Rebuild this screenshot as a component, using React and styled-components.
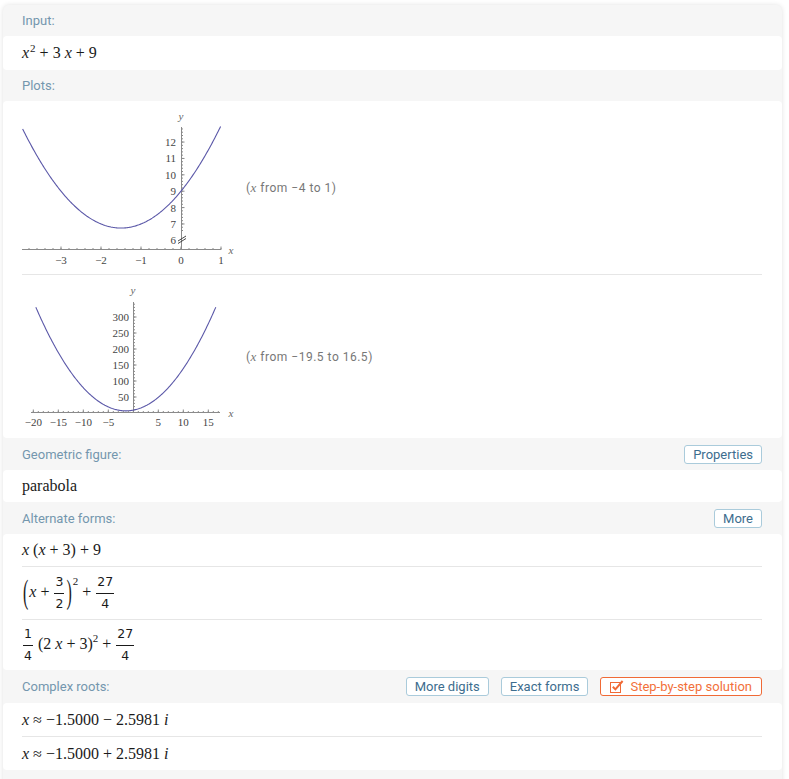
import React from "react";
import styled, { createGlobalStyle } from "styled-components";

const GlobalStyle = createGlobalStyle`
  * { box-sizing: border-box; }
  body {
    margin: 0;
    background: #fff;
    font-family: Roboto, "Liberation Sans", sans-serif;
  }
`;

const Card = styled.div`
  margin: 5px 0 0 3px;
  width: 779px;
  background: #f6f6f6;
  border-radius: 6px 6px 0 0;
  box-shadow: 0 0 5px rgba(0, 0, 0, 0.12);
  padding-bottom: 20px;
`;

const PodHeader = styled.div`
  height: ${(p) => p.$h || 32}px;
  display: flex;
  align-items: center;
  justify-content: space-between;
  padding: 0 20px 0 19px;
  font-size: 13px;
  color: #7497ae;
`;

const PodBody = styled.div`
  background: #fff;
  border-radius: 4px;
  padding: 0 20px 0 19px;
`;

const Row = styled.div`
  display: flex;
  align-items: center;
  height: ${(p) => p.$h}px;
  border-top: ${(p) => (p.$sep ? "1px solid #e6e6e6" : "none")};
  font-family: "Liberation Serif", serif;
  font-size: 16px;
  color: #1a1a1a;
`;

const Math = styled.span`
  white-space: nowrap;
  line-height: 1;
`;

const I = styled.i`
  font-style: italic;
`;

const Sup = styled.sup`
  font-size: 11px;
  position: relative;
  top: ${(p) => p.$top || 0}px;
  margin-left: ${(p) => p.$ml || 0}px;
  vertical-align: super;
  line-height: 0;
`;

const FracBox = styled.span`
  display: inline-flex;
  flex-direction: column;
  align-items: center;
  vertical-align: middle;
  font-family: "DejaVu Sans", sans-serif;
  font-size: 12.5px;
  line-height: 1;
  margin: 0 1px;
`;

const Num = styled.span`
  padding: 0 1px 4px;
  border-bottom: 1px solid #1a1a1a;
  align-self: stretch;
  text-align: center;
`;

const Den = styled.span`
  padding-top: 4px;
`;

const BigParen = styled.span`
  display: inline-block;
  transform: scale(1, 2.1);
  margin: 0 1px;
`;

const Frac = ({ n, d }) => (
  <FracBox>
    <Num>{n}</Num>
    <Den>{d}</Den>
  </FracBox>
);

const Caption = styled.span`
  margin-left: 9px;
  font-family: Roboto, sans-serif;
  font-size: 12px;
  letter-spacing: 0.5px;
  color: #777;
  i {
    font-family: "Liberation Serif", serif;
    font-size: 13px;
  }
`;

const PlotSvg = styled.svg`
  display: block;
  flex: none;
  overflow: visible;
`;

const Buttons = styled.div`
  display: flex;
  gap: 12px;
`;

const Btn = styled.button`
  height: 19px;
  display: inline-flex;
  align-items: center;
  gap: 6px;
  border: 1px solid ${(p) => (p.$orange ? "#f06a36" : "#aacbdb")};
  border-radius: 3px;
  background: #fff;
  color: ${(p) => (p.$orange ? "#f2703a" : "#3d6d8e")};
  font-family: Roboto, sans-serif;
  font-size: 13px;
  padding: 0 ${(p) => (p.$orange ? 9 : 8)}px;
`;

const range = (a, b, s) => {
  const r = [];
  for (let v = a; v <= b + 1e-9; v += s) r.push(+v.toFixed(4));
  return r;
};

const plots = [
  {
    h: 165,
    top: 105,
    mx: (u) => 181 + 40 * u,
    my: (v) => 191.2 - 16.38 * (v - 9),
    u0: -3.96,
    u1: 0.99,
    ax: 249.5,
    ay: 181.5,
    xa: [22, 221],
    ya: [127, 249.5],
    xMinor: range(-3.8, 1, 0.2),
    xMajor: [-3, -2, -1, 0, 1],
    yMinor: range(6.6, 12.8, 0.2),
    yMajor: [7, 8, 9, 10, 11, 12],
    xLabels: [[-3, "−3"], [-2, "−2"], [-1, "−1"], [0, "0"], [1, "1"]],
    yLabels: [12, 11, 10, 9, 8, 7, 6],
    labelY: 260,
    labelX: 176,
    yName: [181, 116],
    xName: [231, 250],
    brk: true,
    caption: ["−4", "1"],
  },
  {
    h: 155,
    top: 279,
    mx: (u) => 133.3 + 5 * u,
    my: (v) => 413 - 0.32 * v,
    u0: -19.5,
    u1: 16.5,
    ax: 412.5,
    ay: 133.5,
    xa: [31, 220],
    ya: [302, 412.5],
    xMinor: range(-20, 17, 1),
    xMajor: [-20, -15, -10, -5, 5, 10, 15],
    yMinor: range(10, 340, 10),
    yMajor: [50, 100, 150, 200, 250, 300],
    xLabels: [[-20, "−20"], [-15, "−15"], [-10, "−10"], [-5, "−5"], [5, "5"], [10, "10"], [15, "15"]],
    yLabels: [300, 250, 200, 150, 100, 50],
    labelY: 422,
    labelX: 129,
    yName: [133, 290],
    xName: [231, 413],
    brk: false,
    caption: ["−19.5", "16.5"],
  },
];

const f = (u) => u * u + 3 * u + 9;

function Plot({ c }) {
  const pts = [];
  for (let i = 0; i <= 240; i++) {
    const u = c.u0 + ((c.u1 - c.u0) * i) / 240;
    pts.push(`${c.mx(u).toFixed(2)},${c.my(f(u)).toFixed(2)}`);
  }
  return (
    <PlotSvg width={215} height={c.h} viewBox={`22 ${c.top} 215 ${c.h}`}>
      <g stroke="#8a8a8a" strokeWidth="1" fill="none">
        <line x1={c.xa[0]} x2={c.xa[1]} y1={c.ax} y2={c.ax} />
        <line x1={c.ay} x2={c.ay} y1={c.ya[0]} y2={c.ya[1]} />
        {c.xMinor.map((u) => (
          <line key={"xm" + u} x1={c.mx(u)} x2={c.mx(u)} y1={c.ax} y2={c.ax - 1.5} />
        ))}
        {c.xMajor.map((u) => (
          <line key={"xM" + u} x1={c.mx(u)} x2={c.mx(u)} y1={c.ax} y2={c.ax - 3} />
        ))}
        {c.yMinor.map((v) => (
          <line key={"ym" + v} x1={c.ay} x2={c.ay + 1.5} y1={c.my(v)} y2={c.my(v)} />
        ))}
        {c.yMajor.map((v) => (
          <line key={"yM" + v} x1={c.ay} x2={c.ay + 3} y1={c.my(v)} y2={c.my(v)} />
        ))}
      </g>
      {c.brk && (
        <g stroke="#333" strokeWidth="0.9">
          <line x1="178" y1="241" x2="186" y2="236" />
          <line x1="178" y1="243.5" x2="186" y2="238.5" />
        </g>
      )}
      <polyline points={pts.join(" ")} fill="none" stroke="#5b58a8" strokeWidth="1.1" />
      <g fontFamily="'Liberation Serif', serif" fontSize="11" fill="#444">
        {c.xLabels.map(([u, t]) => (
          <text key={"xl" + u} x={c.mx(u)} y={c.labelY} textAnchor="middle" dominantBaseline="central">
            {t}
          </text>
        ))}
        {c.yLabels.map((v) => (
          <text key={"yl" + v} x={c.labelX} y={c.my(v)} textAnchor="end" dominantBaseline="central">
            {v}
          </text>
        ))}
        <text x={c.yName[0]} y={c.yName[1]} textAnchor="middle" dominantBaseline="central" fontStyle="italic" fill="#666">
          y
        </text>
        <text x={c.xName[0]} y={c.xName[1]} textAnchor="middle" dominantBaseline="central" fontStyle="italic" fill="#666">
          x
        </text>
      </g>
    </PlotSvg>
  );
}

const StepIcon = () => (
  <svg width="14" height="13" viewBox="0 0 14 13">
    <rect x="0.5" y="2.5" width="10" height="10" fill="none" stroke="#f06a36" />
    <path d="M2.8 6.8 L5.4 9.4 L12.6 1" fill="none" stroke="#f06a36" strokeWidth="2" />
  </svg>
);

const App = () => (
  <>
    <GlobalStyle />
    <Card>
      <PodHeader $h={31}>Input:</PodHeader>
      <PodBody>
        <Row $h={34}>
          <Math>
            <I>x</I>
            <Sup $ml={1}>2</Sup> + 3 <I>x</I> + 9
          </Math>
        </Row>
      </PodBody>

      <PodHeader $h={31}>Plots:</PodHeader>
      <PodBody>
        {plots.map((c, i) => (
          <Row key={i} $h={i === 0 ? 173 : 164} $sep={i > 0}>
            <Plot c={c} />
            <Caption>
              (<i>x</i> from {c.caption[0]} to {c.caption[1]})
            </Caption>
          </Row>
        ))}
      </PodBody>

      <PodHeader>
        Geometric figure:
        <Btn>Properties</Btn>
      </PodHeader>
      <PodBody>
        <Row $h={32}>
          <Math>parabola</Math>
        </Row>
      </PodBody>

      <PodHeader>
        Alternate forms:
        <Btn>More</Btn>
      </PodHeader>
      <PodBody>
        <Row $h={32}>
          <Math>
            <I>x</I> (<I>x</I> + 3) + 9
          </Math>
        </Row>
        <Row $h={53} $sep>
          <Math>
            <BigParen>(</BigParen>
            <I>x</I> + <Frac n="3" d="2" />
            <BigParen>)</BigParen>
            <Sup $top={-5}>2</Sup> + <Frac n="27" d="4" />
          </Math>
        </Row>
        <Row $h={51} $sep>
          <Math>
            <Frac n="1" d="4" /> (2 <I>x</I> + 3)
            <Sup>2</Sup> + <Frac n="27" d="4" />
          </Math>
        </Row>
      </PodBody>

      <PodHeader $h={33}>
        Complex roots:
        <Buttons>
          <Btn>More digits</Btn>
          <Btn>Exact forms</Btn>
          <Btn $orange>
            <StepIcon />
            Step-by-step solution
          </Btn>
        </Buttons>
      </PodHeader>
      <PodBody>
        <Row $h={33}>
          <Math>
            <I>x</I> ≈ −1.5000 − 2.5981 <I>i</I>
          </Math>
        </Row>
        <Row $h={34} $sep>
          <Math>
            <I>x</I> ≈ −1.5000 + 2.5981 <I>i</I>
          </Math>
        </Row>
      </PodBody>
    </Card>
  </>
);

export default App;
